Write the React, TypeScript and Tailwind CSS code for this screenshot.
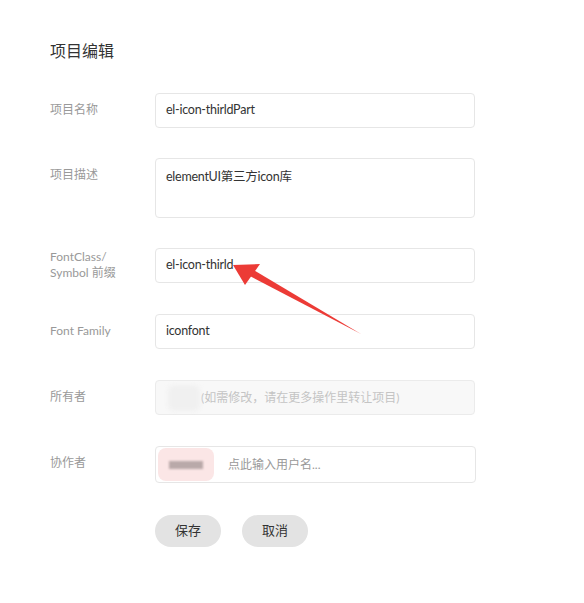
import React from "react";

const font = { fontFamily: 'Lato, "Noto Sans CJK SC", sans-serif' };

function Row({ label, children, labelClass = "pt-[8px] leading-[18px]" }: { label: React.ReactNode; children: React.ReactNode; labelClass?: string }) {
  return (
    <div className="flex">
      <div className={`w-[105px] shrink-0 text-[12px] text-[#999] ${labelClass}`}>{label}</div>
      {children}
    </div>
  );
}

export default function App() {
  return (
    <div className="relative w-[584px] h-[603px] bg-white overflow-hidden" style={font}>
      <div className="pl-[50px] pt-[39px]">
        <div className="h-[24px] leading-[24px] text-[16px] text-[#333]">项目编辑</div>
        <div className="mt-[30px] flex flex-col">
          <Row label="项目名称">
            <div className="w-[320px] h-[35px] rounded-[4px] border border-[#e6e6e6] px-[10px] flex items-center text-[12.5px] tracking-[-0.25px] text-[#333]">
              el-icon-thirldPart
            </div>
          </Row>
          <div className="h-[30px]" />
          <Row label="项目描述">
            <div className="w-[320px] h-[60px] rounded-[4px] border border-[#e6e6e6] px-[10px] pt-[8px] text-[12.5px] tracking-[-0.25px] leading-[20px] text-[#333]">
              elementUI第三方icon库
            </div>
          </Row>
          <div className="h-[30px]" />
          <Row label={<><div>FontClass/</div><div>Symbol 前缀</div></>} labelClass="pt-[1px] leading-[16px]">
            <div className="w-[320px] h-[35px] rounded-[4px] border border-[#e6e6e6] px-[10px] flex items-center text-[12.5px] tracking-[-0.25px] text-[#333]">
              el-icon-thirld
            </div>
          </Row>
          <div className="h-[31px]" />
          <Row label="Font Family">
            <div className="w-[320px] h-[35px] rounded-[4px] border border-[#e6e6e6] px-[10px] flex items-center text-[12.5px] tracking-[-0.25px] text-[#333]">
              iconfont
            </div>
          </Row>
          <div className="h-[31px]" />
          <Row label="所有者">
            <div className="w-[320px] h-[35px] rounded-[4px] border border-[#ebebeb] bg-[#f8f8f8] pl-[12px] flex items-center text-[12px] text-[#c4c4c4]">
              <div className="w-[32px] h-[26px] rounded-[6px] bg-[#f0f0f0] blur-[2px]" />
              <span className="ml-[1px]">(如需修改，请在更多操作里转让项目)</span>
            </div>
          </Row>
          <div className="h-[31px]" />
          <Row label="协作者">
            <div className="w-[321px] h-[37px] rounded-[4px] border border-[#e6e6e6] pl-[2px] flex items-center text-[12px] text-[#999]">
              <div className="w-[56px] h-[33px] rounded-[8px] bg-[#fbe6e6] flex items-center justify-center">
                <div className="w-[34px] h-[8px] bg-[#b9a9a9] blur-[1px]" />
              </div>
              <span className="ml-[14px]">点此输入用户名...</span>
            </div>
          </Row>
          <div className="h-[32px]" />
          <div className="flex pl-[105px] gap-[21px]">
            <button className="w-[66px] h-[32px] rounded-full bg-[#e3e3e3] text-[13px] text-[#333]">保存</button>
            <button className="w-[66px] h-[32px] rounded-full bg-[#e3e3e3] text-[13px] text-[#333]">取消</button>
          </div>
        </div>
      </div>
      <svg className="absolute left-0 top-0 pointer-events-none" width="584" height="603">
        <polygon points="361,334 248,275 252,269" fill="#ec3b36" />
        <polygon points="233,265 260,264 245,285" fill="#ec3b36" />
      </svg>
    </div>
  );
}
